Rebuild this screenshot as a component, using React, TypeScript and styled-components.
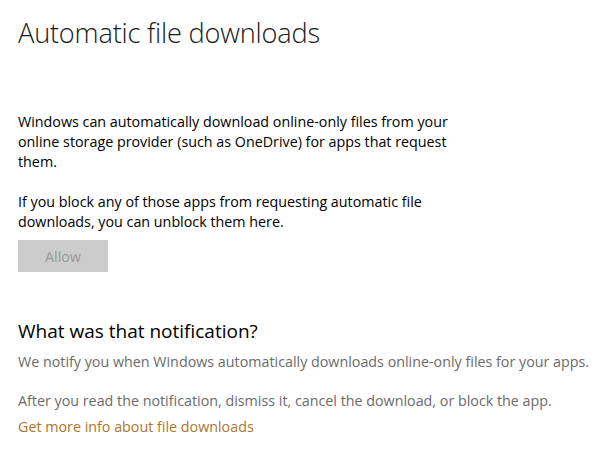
import React from "react";
import styled, { createGlobalStyle } from "styled-components";

const Global = createGlobalStyle`
  html, body { margin: 0; padding: 0; background: #ffffff; }
  body { font-family: "Open Sans", "Noto Sans", sans-serif; }
`;

const Page = styled.div`
  width: 606px;
  height: 458px;
  box-sizing: border-box;
  padding: 14px 18px 0 18px;
  display: flex;
  flex-direction: column;
  overflow: hidden;
`;

const Title = styled.h1`
  margin: 0;
  font-weight: 300;
  font-size: 27.2px;
  line-height: 38px;
  color: #1a1a1a;
  letter-spacing: -0.2px;
`;

const Section = styled.section<{ $top: number }>`
  margin-top: ${(p) => p.$top}px;
  display: flex;
  flex-direction: column;
`;

const Para = styled.p<{ $muted?: boolean; $gap?: number }>`
  margin: ${(p) => p.$gap ?? 0}px 0 0 0;
  font-size: 14.3px;
  line-height: 20px;
  color: ${(p) => (p.$muted ? "#6b6b6b" : "#000000")};
  max-width: 452px;
`;

const WidePara = styled(Para)`
  max-width: none;
  white-space: nowrap;
`;

const Button = styled.button`
  margin-top: 8px;
  width: 90px;
  height: 32px;
  border: none;
  background: #cccccc;
  color: #999999;
  font-family: inherit;
  font-size: 14.3px;
  padding: 0;
`;

const Heading = styled.h2`
  margin: 0;
  font-weight: 400;
  font-size: 19px;
  line-height: 26px;
  color: #000000;
`;

const Link = styled.a`
  margin-top: 6px;
  font-size: 14.3px;
  line-height: 20px;
  color: #a9772e;
  text-decoration: none;
`;

export default function App() {
  return (
    <>
      <Global />
      <Page>
        <Title>Automatic file downloads</Title>
        <Section $top={60}>
          <Para>
            Windows can automatically download online-only files from your
            online storage provider (such as OneDrive) for apps that request
            them.
          </Para>
          <Para $gap={20}>
            If you block any of those apps from requesting automatic file
            downloads, you can unblock them here.
          </Para>
          <Button disabled>Allow</Button>
        </Section>
        <Section $top={46}>
          <Heading>What was that notification?</Heading>
          <WidePara $muted $gap={8}>
            We notify you when Windows automatically downloads online-only files for your apps.
          </WidePara>
          <WidePara $muted $gap={19}>
            After you read the notification, dismiss it, cancel the download, or block the app.
          </WidePara>
          <Link href="#">Get more info about file downloads</Link>
        </Section>
      </Page>
    </>
  );
}
